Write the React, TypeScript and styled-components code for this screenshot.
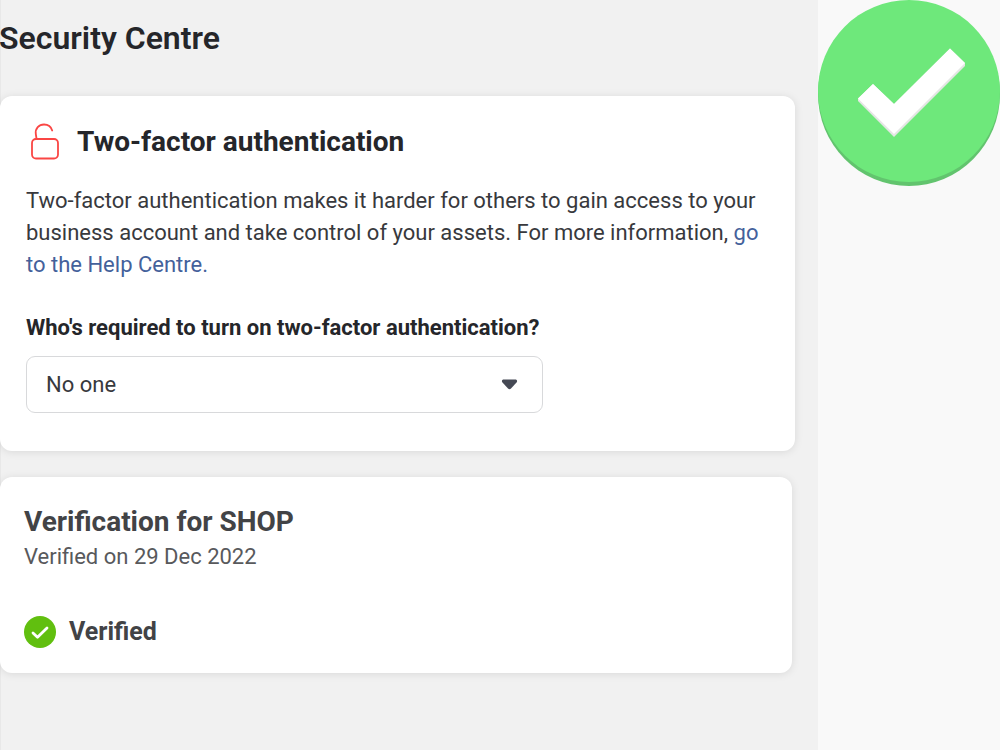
import React from 'react';
import styled, { createGlobalStyle } from 'styled-components';

const GlobalStyle = createGlobalStyle`
  * { box-sizing: border-box; }
  body { margin: 0; background: #f9f9f9; color: #25262a; font-family: Roboto, sans-serif; }
  h1, h2, p { margin: 0; }
`;
const Page = styled.div`
  display: grid;
  grid-template-columns: minmax(0, 1fr) 182px;
  min-height: 100vh;
`;
const Main = styled.main`
  background: #f1f1f1;
  box-shadow: inset 1px 0 0 #e8e8e8;
  padding: 18px 23px 24px 0;
`;
const PageTitle = styled.h1`
  font-size: 32px;
  line-height: 40px;
  font-weight: 600;
  margin: 0 0 38px -1px;
`;
const Card = styled.section<{ $compact?: boolean }>`
  background: #fff;
  border-radius: 12px;
  box-shadow: 0 1px 8px rgba(0, 0, 0, 0.1);
  padding: ${p => (p.$compact ? '25px 24px 24px' : '25px 26px 38px')};
  margin: ${p => (p.$compact ? '0 3px 0 0' : '0 0 26px')};
`;
const Heading = styled.div`
  display: flex;
  align-items: center;
  gap: 17px;
  padding-left: 4px;
  margin-bottom: 22px;
  height: 42px;
`;
const CardTitle = styled.h2<{ $muted?: boolean }>`
  font-size: 28px;
  line-height: 40px;
  font-weight: 700;
  color: ${p => (p.$muted ? '#424346' : '#25262a')};
`;
const Text = styled.p`
  font-size: 22px;
  line-height: 32px;
  color: #38393d;
`;
const Link = styled.a`
  color: #44619b;
  text-decoration: none;
`;
const Label = styled.label`
  display: block;
  font-size: 22px;
  line-height: 32px;
  font-weight: 700;
  margin: 31px 0 12px;
`;
const SelectBox = styled.div`
  display: grid;
  align-items: center;
  max-width: 517px;
  & > * { grid-area: 1 / 1; }
  & > svg { justify-self: end; margin-right: 25px; pointer-events: none; }
`;
const Select = styled.select`
  appearance: none;
  width: 100%;
  height: 57px;
  padding: 0 19px;
  border: 1px solid #d8d9db;
  border-radius: 9px;
  background: #fff;
  color: #38393d;
  font: 400 22px Roboto, sans-serif;
`;
const Note = styled.p`
  font-size: 22px;
  line-height: 30px;
  color: #58595c;
  margin-bottom: 43px;
`;
const Status = styled.div`
  display: flex;
  align-items: center;
  gap: 13px;
  font-size: 25px;
  line-height: 34px;
  font-weight: 700;
  color: #424346;
`;
const Side = styled.aside`
  svg { display: block; }
`;

export default function App() {
  return (
    <>
      <GlobalStyle />
      <Page>
        <Main>
          <PageTitle>Security Centre</PageTitle>
          <Card>
            <Heading>
              <svg width="30" height="38" viewBox="0 0 30 38" fill="none" stroke="#fa4644" strokeWidth="1.8" strokeLinecap="round" aria-hidden="true">
                <rect x="2" y="16" width="26" height="19.500" rx="4" />
                <path d="M6.500 15.500L5.800 11C5 5.500 9 1.500 14 1.500c4 0 7 2 8.200 6" />
              </svg>
              <CardTitle>Two-factor authentication</CardTitle>
            </Heading>
            <Text>
              Two-factor authentication makes it harder for others to gain access to your business account and take control of your assets. For more information, <Link href="#help">go to the Help Centre.</Link>
            </Text>
            <Label htmlFor="required">Who's required to turn on two-factor authentication?</Label>
            <SelectBox>
              <Select id="required" defaultValue="none">
                <option value="none">No one</option>
                <option value="admins">Admins only</option>
                <option value="all">Everyone</option>
              </Select>
              <svg width="17" height="11" viewBox="0 0 17 11" aria-hidden="true">
                <path d="M2 .5h13q2 1 .5 3L10 9.500q-1.500 1.300-3 0L1.500 3.500Q0 1.500 2 .5z" fill="#454954" />
              </svg>
            </SelectBox>
          </Card>
          <Card $compact>
            <CardTitle $muted>Verification for SHOP</CardTitle>
            <Note>Verified on 29 Dec 2022</Note>
            <Status>
              <svg width="32" height="32" viewBox="0 0 32 32" aria-hidden="true">
                <circle cx="16" cy="16" r="16" fill="#61bf0f" />
                <path d="M9 17l4.500 4.200L23 12" fill="none" stroke="#fff" strokeWidth="2.800" strokeLinecap="round" strokeLinejoin="round" />
              </svg>
              Verified
            </Status>
          </Card>
        </Main>
        <Side>
          <svg width="182" height="186" viewBox="0 0 182 186" role="img" aria-label="Complete">
            <ellipse cx="91" cy="94" rx="91" ry="92" fill="#62c46e" />
            <ellipse cx="91" cy="91" rx="91" ry="91" fill="#6ee87b" />
            <path d="M40 98.500L55 84l21 20 56-55.500L147 63v3L76 137 40 101z" fill="#e5e6e5" />
            <path d="M40 98.500L55 84l21 20 56-55.500L147 63 76 134z" fill="#fff" />
          </svg>
        </Side>
      </Page>
    </>
  );
}
